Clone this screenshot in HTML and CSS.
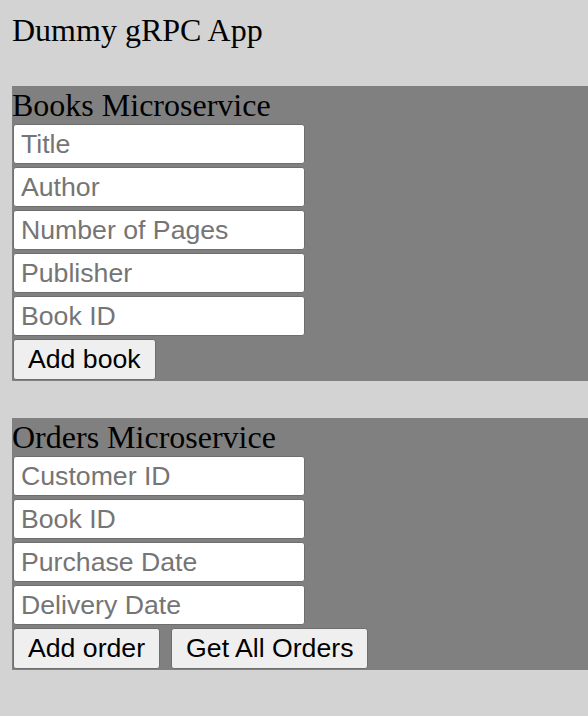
FILE: index.html
```html
<!DOCTYPE html>
<html>
<head>
<meta charset="utf-8">
<title>Dummy gRPC App</title>
<link rel="stylesheet" href="styles.css">
</head>
<body>
<div class="app-title">Dummy gRPC App</div>
<section class="service">
  <div class="service-title">Books Microservice</div>
  <div class="fields">
    <input class="field" type="text" placeholder="Title">
    <input class="field" type="text" placeholder="Author">
    <input class="field" type="text" placeholder="Number of Pages">
    <input class="field" type="text" placeholder="Publisher">
    <input class="field" type="text" placeholder="Book ID">
    <div class="actions">
      <button class="btn">Add book</button>
    </div>
  </div>
</section>
<section class="service">
  <div class="service-title">Orders Microservice</div>
  <div class="fields">
    <input class="field" type="text" placeholder="Customer ID">
    <input class="field" type="text" placeholder="Book ID">
    <input class="field" type="text" placeholder="Purchase Date">
    <input class="field" type="text" placeholder="Delivery Date">
    <div class="actions">
      <button class="btn">Add order</button>
      <button class="btn">Get All Orders</button>
    </div>
  </div>
</section>
</body>
</html>
```
FILE: styles.css
```css
html, body {
  background: #d3d3d3;
}
body {
  margin: 0;
  padding: 12px 0 0 12px;
  font-family: "Liberation Serif", "Times New Roman", serif;
  color: #000;
}
.app-title {
  font-size: 32px;
  line-height: 36px;
  height: 36px;
  margin-bottom: 38px;
}
.service {
  background: #808080;
  padding: 0 0 1px 1px;
  margin-bottom: 37px;
}
.service-title {
  font-size: 32px;
  line-height: 38px;
  height: 38px;
  margin-left: -1px;
}
.fields {
  display: flex;
  flex-direction: column;
  align-items: flex-start;
  gap: 3px;
}
.field {
  box-sizing: border-box;
  width: 292px;
  height: 40px;
  margin: 0;
  padding: 0 7px;
  border: 1px solid #6e6e6e;
  border-radius: 3px;
  background: #fff;
  font-family: "Liberation Sans", Arial, sans-serif;
  font-size: 26.67px;
  color: #000;
  outline: none;
}
.field::placeholder {
  color: #757575;
}
.actions {
  display: flex;
  gap: 11px;
}
.btn {
  box-sizing: border-box;
  height: 41px;
  margin: 0;
  padding: 0 14px;
  border: 1px solid #6e6e6e;
  border-radius: 3px;
  background: #efefef;
  font-family: "Liberation Sans", Arial, sans-serif;
  font-size: 26.67px;
  color: #000;
}
```
